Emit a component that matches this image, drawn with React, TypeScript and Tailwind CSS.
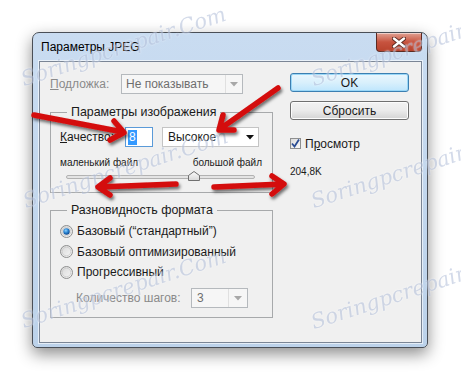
import React from "react";

const Tri = ({ color }: { color: string }) => (
  <svg width="8" height="5" viewBox="0 0 8 5">
    <path d="M0 0 L8 0 L4 4.5 Z" fill={color} />
  </svg>
);

const Radio = ({ checked }: { checked?: boolean }) => (
  <svg width="13" height="13" viewBox="0 0 13 13">
    <defs>
      <linearGradient id="rg" x1="0" y1="0" x2="1" y2="1">
        <stop offset="0" stopColor="#d6d6d6" />
        <stop offset="1" stopColor="#f8f8f8" />
      </linearGradient>
      <radialGradient id="rd" cx="0.4" cy="0.35" r="0.7">
        <stop offset="0" stopColor="#8fd3ff" />
        <stop offset="0.5" stopColor="#2a84d2" />
        <stop offset="1" stopColor="#0b3f83" />
      </radialGradient>
    </defs>
    <circle cx="6.5" cy="6.5" r="6" fill="url(#rg)" stroke="#8e8f8f" strokeWidth="1" />
    <circle cx="6.5" cy="6.5" r="4.3" fill="none" stroke="#c9c9c9" strokeWidth="0.8" />
    {checked && <circle cx="6.5" cy="6.5" r="3.2" fill="url(#rd)" />}
  </svg>
);

const Arrow = ({ d }: { d: string }) => (
  <path d={d} fill="none" stroke="#d40b0b" strokeWidth="5.5" strokeLinecap="round" strokeLinejoin="round" />
);

const WM = ({ cls }: { cls: string }) => (
  <div
    className={`absolute origin-bottom-left -rotate-[18deg] whitespace-nowrap text-[21px] leading-[22px] italic text-[#b7c3dc] opacity-60 pointer-events-none ${cls}`}
    style={{ fontFamily: '"DejaVu Serif", serif', textShadow: "0 0 2px #ffffff" }}
  >
    Soringpcrepair.Com
  </div>
);

export default function App() {
  return (
    <div
      className="relative w-[461px] h-[381px] overflow-hidden bg-white text-[12px] text-[#1a1a1a]"
      style={{ fontFamily: '"Liberation Sans", Arial, sans-serif' }}
    >
      <div className="pt-[32px] pl-[32px]">
        <div className="flex flex-col w-[396px] h-[316px] rounded-t-[7px] rounded-b-[5px] border border-[#4a4f57] bg-gradient-to-b from-[#c9dcf1] to-[#bcd2ea] shadow-[0_6px_16px_rgba(0,0,0,0.45)]">
          {/* Title bar */}
          <div className="flex h-[28px] items-start justify-between">
            <div className="pl-[8px] pt-[6px] text-[12px] leading-[16px] text-black">Параметры JPEG</div>
            <div className="mr-[5px] flex h-[19px] w-[46px] items-center justify-center rounded-b-[4px] border border-t-0 border-[#5b2a22] bg-gradient-to-b from-[#e0a193] via-[#c7533f] to-[#b8432d] shadow-[inset_0_1px_0_rgba(255,255,255,0.5)]">
              <svg width="14" height="11" viewBox="0 0 14 11">
                <path d="M2 1.5 L12 9.5 M12 1.5 L2 9.5" stroke="#5b2a22" strokeWidth="4.2" strokeLinecap="round" />
                <path d="M2 1.5 L12 9.5 M12 1.5 L2 9.5" stroke="#ffffff" strokeWidth="2.4" strokeLinecap="round" />
              </svg>
            </div>
          </div>
          {/* Client */}
          <div className="mb-[4px] ml-[6px] mr-[5px] flex flex-1 border border-[#7a8595] bg-[#f0f0f0] shadow-[0_0_0_1px_rgba(255,255,255,0.6)]">
            {/* Left column */}
            <div className="ml-[10px] flex w-[223px] flex-col">
              <div className="mt-[12px] flex h-[20px] items-center">
                <span className="w-[71px] text-[#8a8a8a]">
                  <span className="underline">П</span>одложка:
                </span>
                <div className="flex h-[20px] w-[122px] items-center border border-[#b5b9bd] bg-[#f6f6f6]">
                  <span className="flex-1 pl-[4px] text-[#6e6e6e] leading-[18px]">Не показывать</span>
                  <div className="flex h-full w-[17px] items-center justify-center border-l border-[#e0e0e0]">
                    <Tri color="#a8a8a8" />
                  </div>
                </div>
              </div>

              <fieldset className="mt-[10px] h-[89px] border border-[#a7a9ab]">
                <legend className="ml-[16px] px-[4px] text-[12.4px] leading-[16px]">Параметры изображения</legend>
                <div className="flex flex-col pl-[9px] pt-[7px]">
                  <div className="flex h-[20px] items-center">
                    <span className="w-[65px] whitespace-nowrap">
                      <span className="underline">К</span>ачество:
                    </span>
                    <div className="flex h-[20px] w-[28px] items-center border border-[#5a9ad8] bg-white pl-[2px]">
                      <span className="bg-[#3399ff] px-[1px] leading-[15px] text-white">8</span>
                    </div>
                    <div className="ml-[9px] flex h-[20px] w-[97px] items-center border border-[#c4c4c4] bg-white">
                      <span className="flex-1 pl-[5px] leading-[18px]">Высокое</span>
                      <div className="flex w-[17px] items-center justify-center">
                        <Tri color="#111111" />
                      </div>
                    </div>
                  </div>
                  <div className="mt-[9px] flex w-[202px] justify-between text-[10px] leading-[14px] whitespace-nowrap">
                    <span>маленький файл</span>
                    <span>большой файл</span>
                  </div>
                  <div className="ml-[6px] mt-[1px] flex h-[12px] w-[189px] items-center">
                    <div className="relative h-[4px] w-full rounded-[2px] border border-[#b2b2b2] bg-[#e4e4e4]">
                      <svg className="absolute left-[121px] top-[-5px]" width="12" height="10" viewBox="0 0 12 10">
                        <defs>
                          <linearGradient id="th" x1="0" y1="0" x2="0" y2="1">
                            <stop offset="0" stopColor="#fbfbfb" />
                            <stop offset="1" stopColor="#d8d8d8" />
                          </linearGradient>
                        </defs>
                        <path d="M0.5 4.5 L6 0.5 L11.5 4.5 L11.5 9.5 L0.5 9.5 Z" fill="url(#th)" stroke="#707070" strokeWidth="1" />
                      </svg>
                    </div>
                  </div>
                </div>
              </fieldset>

              <fieldset className="mt-[9px] h-[116px] border border-[#a7a9ab]">
                <legend className="ml-[16px] px-[4px] text-[12.4px] leading-[16px]">Разновидность формата</legend>
                <div className="flex flex-col pl-[9px] pt-[3px]">
                  <div className="flex h-[20px] items-center gap-[4px]">
                    <Radio checked />
                    <span>Базовый (“стандартный”)</span>
                  </div>
                  <div className="flex h-[21px] items-center gap-[4px]">
                    <Radio />
                    <span>Базовый оптимизированный</span>
                  </div>
                  <div className="flex h-[20px] items-center gap-[4px]">
                    <Radio />
                    <span>Прогрессивный</span>
                  </div>
                  <div className="mt-[6px] flex h-[20px] items-center pl-[16px]">
                    <span className="w-[115px] whitespace-nowrap text-[#8a8a8a]">Количество шагов:</span>
                    <div className="flex h-[20px] w-[57px] items-center border border-[#b5b9bd] bg-[#f6f6f6]">
                      <span className="flex-1 pl-[5px] text-[#6e6e6e] leading-[18px]">3</span>
                      <div className="flex h-full w-[19px] items-center justify-center border-l border-[#e0e0e0]">
                        <Tri color="#a8a8a8" />
                      </div>
                    </div>
                  </div>
                </div>
              </fieldset>
            </div>

            {/* Right column */}
            <div className="ml-[17px] flex w-[119px] flex-col">
              <div className="mt-[11px] flex h-[19px] items-center justify-center rounded-[3px] border border-[#3c7fb1] bg-gradient-to-b from-[#eaf6fd] via-[#d9f0fc] to-[#bee6fd] shadow-[inset_0_0_0_1px_#9ad7f7] leading-[16px]">
                OK
              </div>
              <div className="mt-[9px] flex h-[19px] items-center justify-center rounded-[3px] border border-[#707070] bg-gradient-to-b from-[#f2f2f2] via-[#ebebeb] to-[#d4d4d4] shadow-[inset_0_0_0_1px_#fcfcfc] leading-[16px]">
                Сбросить
              </div>
              <div className="mt-[18px] flex h-[11px] items-center gap-[4px]">
                <div className="flex h-[11px] w-[11px] items-center justify-center border border-[#8e8f8f] bg-gradient-to-br from-[#dcdcdc] to-[#fafafa]">
                  <svg width="9" height="9" viewBox="0 0 9 9">
                    <path d="M1 4.5 L3.5 7.5 L8 0.5" fill="none" stroke="#2a4c93" strokeWidth="1.8" />
                  </svg>
                </div>
                <span className="leading-[16px]">
                  П<span className="underline">р</span>осмотр
                </span>
              </div>
              <div className="mt-[16px] text-[10px] leading-[14px]">204,8K</div>
            </div>
          </div>
        </div>
      </div>

      {/* Watermarks */}
      <WM cls="left-[25px] top-[68px]" />
      <WM cls="left-[315px] top-[68px]" />
      <WM cls="left-[27px] top-[190px]" />
      <WM cls="left-[315px] top-[190px]" />
      <WM cls="left-[25px] top-[310px]" />
      <WM cls="left-[315px] top-[311px]" />

      {/* Red arrows */}
      <svg className="pointer-events-none absolute left-0 top-0" width="461" height="381" viewBox="0 0 461 381">
        <defs>
          <filter id="sh" x="-20%" y="-20%" width="140%" height="140%">
            <feDropShadow dx="1.5" dy="2.5" stdDeviation="1.8" floodColor="#000" floodOpacity="0.55" />
          </filter>
        </defs>
        <g filter="url(#sh)">
          <Arrow d="M34 115 L123 132 M110 140 L124 132.5 L114 121" />
          <Arrow d="M278 88 L220 129 M223 115 L219 130 L234 130" />
          <Arrow d="M176 184 L99 187 M110 178 L98 187 L110 195" />
          <Arrow d="M214 187 L283 184 M272 176 L284 184 L272 194" />
        </g>
      </svg>
    </div>
  );
}
